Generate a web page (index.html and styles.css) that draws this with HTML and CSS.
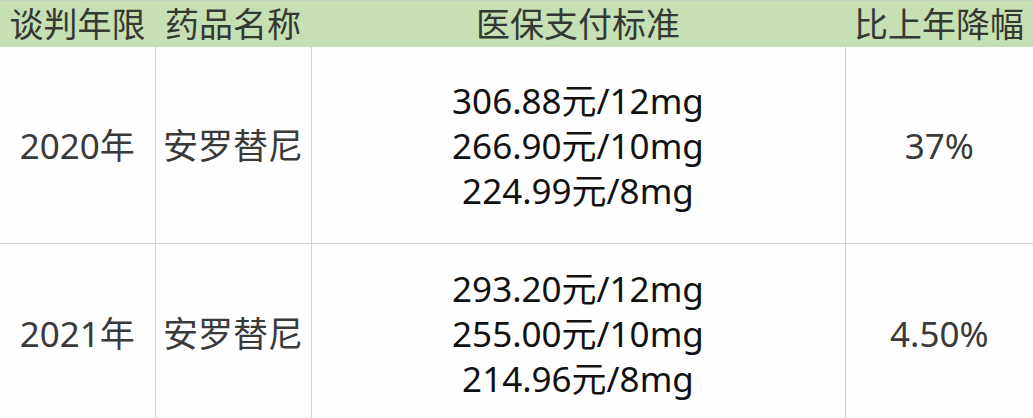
FILE: index.html
```html
<!DOCTYPE html>
<html lang="zh">
<head>
<meta charset="utf-8">
<link rel="stylesheet" href="styles.css">
</head>
<body>
<table class="tbl">
  <colgroup>
    <col class="c1"><col class="c2"><col class="c3"><col class="c4">
  </colgroup>
  <thead>
    <tr class="head">
      <th>谈判年限</th><th>药品名称</th><th>医保支付标准</th><th>比上年降幅</th>
    </tr>
  </thead>
  <tbody>
    <tr class="r1">
      <td class="g">2020年</td>
      <td class="g">安罗替尼</td>
      <td class="price">306.88元/12mg<br>266.90元/10mg<br>224.99元/8mg</td>
      <td class="g">37%</td>
    </tr>
    <tr class="r2">
      <td class="g">2021年</td>
      <td class="g">安罗替尼</td>
      <td class="price">293.20元/12mg<br>255.00元/10mg<br>214.96元/8mg</td>
      <td class="g">4.50%</td>
    </tr>
  </tbody>
</table>
</body>
</html>
```
FILE: styles.css
```css
html, body {
  margin: 0;
  padding: 0;
  background: #fefefe;
  overflow: hidden;
}
.tbl {
  width: 1033px;
  border-collapse: collapse;
  table-layout: fixed;
  font-family: "Noto Sans", "Noto Sans CJK SC", sans-serif;
  border-top: 1px solid #c8cfc4;
}
.c1 { width: 155px; }
.c2 { width: 156px; }
.c3 { width: 534px; }
.c4 { width: 188px; }
.head th {
  background: #c6e0b4;
  color: #353833;
  font-weight: 400;
  font-size: 34px;
  height: 46px;
  padding: 0;
  line-height: 46px;
  white-space: nowrap;
  overflow: visible;
}
td {
  border: 1px solid #d3d3d3;
  text-align: center;
  vertical-align: middle;
  padding: 0;
  font-size: 35px;
  line-height: 45px;
}
tbody tr td:first-child { border-left: none; }
tbody tr td:last-child { border-right: none; }
.r1 td { height: 196px; border-top: none; }
.r2 td { height: 178px; border-bottom: none; }
.g { color: #3a3a3a; }
.price { color: #111; }
```
